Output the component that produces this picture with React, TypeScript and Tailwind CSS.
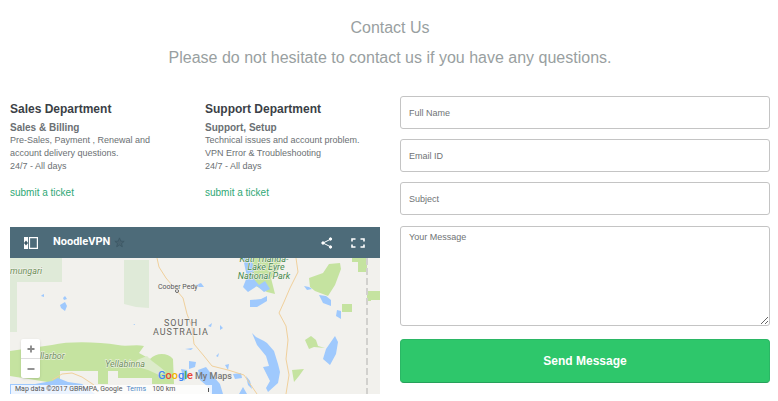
import React from "react";

type Department = { title: string; topic: string; lines: string[] };

const departments: Department[] = [
  {
    title: "Sales Department",
    topic: "Sales & Billing",
    lines: ["Pre-Sales, Payment , Renewal and", "account delivery questions.", "24/7 - All days"],
  },
  {
    title: "Support Department",
    topic: "Support, Setup",
    lines: ["Technical issues and account problem.", "VPN Error & Troubleshooting", "24/7 - All days"],
  },
];

function DepartmentCard({ title, topic, lines }: Department) {
  return (
    <section className="pt-1 text-[10px] leading-[13px] text-[#6b7073]">
      <h2 className="text-[12px] leading-[18px] font-bold text-[#3b3f46]">{title}</h2>
      <p className="mt-[3px] font-bold">{topic}</p>
      <div className="text-[9px]">
        {lines.map((line) => (
          <p key={line} className="whitespace-nowrap">{line}</p>
        ))}
      </div>
      <a href="#ticket" className="mt-[13px] inline-block text-[#2fa876]">submit a ticket</a>
    </section>
  );
}

function MapDrawing() {
  return (
    <svg viewBox="0 0 370 136" preserveAspectRatio="xMinYMin slice" className="block h-full w-full" aria-label="Map of South Australia">
      <rect width="370" height="136" fill="#f2f1ed" />
      <g fill="#dfead8">
        <path d="M0 0H52V24H7V74H0Z" />
        <path d="M114 2H139V50L126 49L114 46Z" />
      </g>
      <g fill="#c5e3a0">
        <path d="M0 93C14 91 28 89 42 87C60 83 88 84 108 87C116 89 126 86 134 88L129 95L140 101C147 94 158 95 163 101L164 126H142V120H108V113H98V126H88V113H50V126L0 118Z" />
        <path d="M236 0H272L268 13L261 20L265 36L257 34L242 26Z" />
        <path d="M299 20L313 15L319 6L330 5L331 11L325 27L318 38L305 33L300 29Z" />
        <path d="M342 0H357V14H348V4H342ZM357 33H370V42H361V43H357ZM332 46H342V54H332ZM295 82L301 78L306 82L308 88L315 90L304 89L299 91ZM282 112L294 111L289 118L284 124Z" />
      </g>
      <path d="M127 102L137 98L142 103L150 109L156 114L149 117L138 112L128 109Z" fill="#dcebca" />
      <g fill="#9fc9fd">
        <path d="M32 37L34 36V39L31 38ZM53 40L55 38L57 41L54 42ZM50 47L55 44L57 48L55 53L51 50Z" />
        <path d="M25 126L42 123L48 120L58 124L72 126L85 136H0V126Z" />
        <path d="M233 0H240L244 9L243 20L249 27L255 23L260 31L254 34L247 28L238 34L233 29L237 19Z" />
        <path d="M240 42L251 41L257 38L257 43L247 49L240 49Z" />
        <path d="M242 75L246 79L254 83L257 85L264 93L268 106L270 114L268 125L258 134L256 130L260 123L253 109L259 108L256 98L247 87Z" />
        <path d="M294 28L299 29L302 31L297 32ZM309 37L316 38L321 42L321 48L313 45ZM327 52L331 53L331 61L326 58ZM325 78L328 84L326 96L320 107L313 101L316 91Z" />
        <path d="M179 103L186 104L185 109L179 111ZM171 111L177 112L178 119L174 123ZM188 112L196 109L202 117L210 126L213 136H201L197 128L190 122Z" />
        <path d="M223 116L231 115L232 120L225 121ZM236 118L240 123L242 131L238 127ZM233 129L237 136H229ZM215 107L219 106L218 112ZM206 98L209 95L208 99Z" />
        <path d="M186 27L191 25L194 29L189 29ZM198 68L202 65L201 69ZM210 67L213 70L210 72ZM175 91L183 90L181 92ZM123 66H125V67Z" />
      </g>
      <g fill="none" stroke="#f0d09c" strokeWidth="1">
        <path d="M147 0L149 9L156 20L167 33L173 40L177 56L182 69L184 86L194 98L202 108L218 112L234 117L247 136" />
        <path d="M286 0L288 14L280 30L274 44L269 55L276 68L278 82L276 101L279 117L276 136" />
        <path d="M42 122L52 116L62 115L72 119L84 127" />
      </g>
      <path d="M357 0V136" stroke="#d2d1ce" strokeWidth="2" strokeDasharray="7 3" />
      <circle cx="167" cy="33" r="1.5" fill="#fff" stroke="#666" strokeWidth="1" />
      <g fontFamily="Roboto, sans-serif">
        <g stroke="#f5f4f0" strokeWidth="1" paintOrder="stroke">
          <g fill="#6c9057" fontStyle="italic" fontSize="9">
            <text x="0" y="16">mungari</text>
            <text x="30" y="101">llarbor</text>
            <text x="95" y="109">Yellabinna</text>
          </g>
          <g fill="#47894d" fontStyle="italic" fontSize="9" textAnchor="middle">
            <text x="254" y="4">Kati Thanda-</text>
            <text x="256" y="12">Lake Eyre</text>
            <text x="254" y="21">National Park</text>
          </g>
          <text x="148" y="31" fill="#555" fontSize="7">Coober Pedy</text>
          <g fill="#66645f" fontSize="9" letterSpacing="1" textAnchor="middle">
            <text x="171" y="68">SOUTH</text>
            <text x="171" y="77">AUSTRALIA</text>
          </g>
        </g>
        <text x="148" y="121" fontSize="11" fontWeight="500">
          <tspan fill="#4285f4">G</tspan><tspan fill="#ea4335">o</tspan><tspan fill="#f4b400">o</tspan><tspan fill="#4285f4">g</tspan><tspan fill="#34a853">l</tspan><tspan fill="#ea4335">e</tspan>
        </text>
        <text x="185" y="121" fill="#777" fontSize="9" fontWeight="500">My Maps</text>
      </g>
    </svg>
  );
}

function MapPanel() {
  return (
    <section className="mt-7 font-[Roboto,sans-serif]">
      <header className="flex h-[31px] items-center bg-[#4d6b79] pr-[15px] pl-[14px] text-white">
        <svg viewBox="0 0 14 12" className="h-3 w-[14px]" aria-hidden="true">
          <path d="M0 0H4V12H0Z" fill="white" />
          <path d="M0 6L2 3.500L4 6L2 8.500Z" fill="#3c5866" />
          <path d="M5.500 0.600H13.400V11.400H5.500Z" fill="none" stroke="white" strokeWidth="1.200" />
        </svg>
        <h2 className="ml-[15px] text-[11px] font-bold">NoodleVPN</h2>
        <button type="button" aria-label="Star map" className="ml-1">
          <svg viewBox="0 0 12 12" className="size-[11px]">
            <path d="M6 1L7.400 4.500L11 4.800L8.200 7.100L9.100 10.700L6 8.700L2.900 10.700L3.800 7.100L1 4.800L4.600 4.500Z" fill="#496370" stroke="#3d5966" />
          </svg>
        </button>
        <button type="button" aria-label="Share map" className="ml-auto">
          <svg viewBox="0 0 12 12" className="size-3" fill="white" stroke="white">
            <path d="M10 2L2 6L10 10" fill="none" />
            <circle cx="9.500" cy="2" r="1.200" /><circle cx="2" cy="6" r="1.200" /><circle cx="9.500" cy="10" r="1.200" />
          </svg>
        </button>
        <button type="button" aria-label="Full screen" className="ml-[18px]">
          <svg viewBox="0 0 14 10" className="h-[10px] w-[14px]" fill="none" stroke="white" strokeWidth="1.600">
            <path d="M1 3.500V1H4.500M9.500 1H13V3.500M13 6.500V9H9.500M4.500 9H1V6.500" />
          </svg>
        </button>
      </header>
      <div className="relative h-[136px] overflow-hidden">
        <MapDrawing />
        <div className="absolute bottom-4 left-[11px] flex w-[19px] flex-col rounded-xs bg-white text-[#888] shadow">
          <button type="button" aria-label="Zoom in" className="flex h-5 items-center justify-center border-b border-[#ddd]">
            <svg viewBox="0 0 8 8" className="size-2" stroke="currentColor" strokeWidth="1.800"><path d="M4 0.500V7.500M0.500 4H7.500" /></svg>
          </button>
          <button type="button" aria-label="Zoom out" className="flex h-[19px] items-center justify-center">
            <svg viewBox="0 0 8 8" className="size-2" stroke="currentColor" strokeWidth="1.800"><path d="M0.500 4H7.500" /></svg>
          </button>
        </div>
        <div className="absolute bottom-0 left-px flex h-[9px] w-[201px] items-center bg-white/80 pl-1 text-[7px] leading-[9px] text-[#555]">
          <span>Map data ©2017 GBRMPA, Google</span>
          <a href="#terms" className="ml-1 text-[#4b87c5]">Terms</a>
          <span className="ml-1.5">100 km</span>
          <span className="mr-[3px] ml-auto h-1 w-px bg-[#555]" />
        </div>
      </div>
    </section>
  );
}

const fieldStyle =
  "block w-full rounded-[3px] border border-[#c4c4c4] bg-white px-2 text-[9px] text-[#555] placeholder:text-[#6f7375] placeholder:opacity-100";

function ContactForm() {
  return (
    <form onSubmit={(e) => e.preventDefault()}>
      <div className="flex flex-col gap-[10px]">
        {["Full Name", "Email ID", "Subject"].map((name) => (
          <input key={name} type="text" aria-label={name} placeholder={name} className={fieldStyle + " h-[33px]"} />
        ))}
      </div>
      <textarea aria-label="Your Message" placeholder="Your Message" className={fieldStyle + " mt-[11px] h-[100px] resize-y py-1 leading-[13px]"} />
      <button type="submit" className="mt-[13px] h-11 w-full rounded-[4px] border border-[#2bb765] border-b-[#27a05a] bg-[#2ec76b] text-[12px] font-bold text-white">
        Send Message
      </button>
    </form>
  );
}

export default function App() {
  return (
    <main className="bg-white pt-[13px] pr-2 pb-[7px] pl-[10px] font-['Liberation_Sans',Arial,sans-serif]">
      <header className="text-center text-[16px] leading-[30px] text-[#999fa1]">
        <h1>Contact Us</h1>
        <p>Please do not hesitate to contact us if you have any questions.</p>
      </header>
      <div className="mt-[23px] grid grid-cols-2 gap-5">
        <div>
          <div className="grid grid-cols-2 gap-5">
            {departments.map((department) => (
              <DepartmentCard key={department.title} {...department} />
            ))}
          </div>
          <MapPanel />
        </div>
        <ContactForm />
      </div>
    </main>
  );
}
